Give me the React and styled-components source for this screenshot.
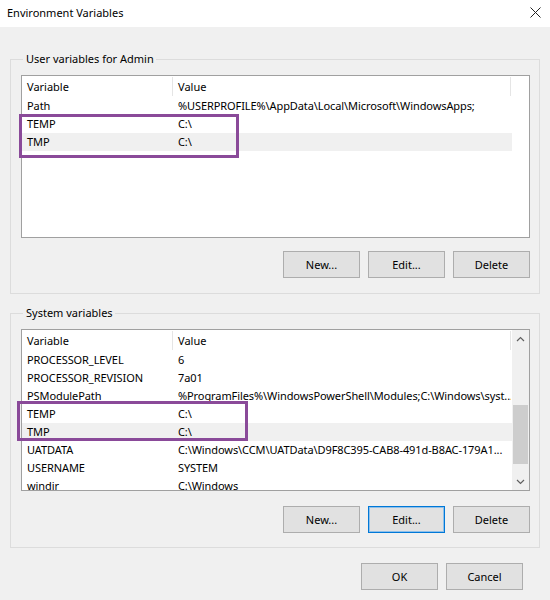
import React from "react";
import styled, { createGlobalStyle } from "styled-components";

const Global = createGlobalStyle`
  html, body { margin: 0; padding: 0; background: #f0f0f0; }
  body { font-family: "Noto Sans", "Segoe UI", sans-serif; font-size: 11px; color: #000; }
  * { box-sizing: border-box; }
`;

const Window = styled.div`
  width: 550px;
  height: 600px;
  display: flex;
  flex-direction: column;
  background: #f0f0f0;
  overflow: hidden;
`;

const TitleBar = styled.div`
  height: 27px;
  flex: 0 0 27px;
  background: #fff;
  display: flex;
  align-items: center;
  justify-content: space-between;
  padding: 0 9px 3px 7px;
  font-size: 11px;
`;

const CloseIcon = () => (
  <svg width="11" height="11" viewBox="0 0 11 11">
    <path d="M0.5 0.5 L10.5 10.5 M10.5 0.5 L0.5 10.5" stroke="#222" strokeWidth="1" fill="none" />
  </svg>
);

const Body = styled.div`
  flex: 1;
  display: flex;
  flex-direction: column;
  padding: 24px 10px 0 10px;
`;

const Group = styled.fieldset`
  margin: ${(p) => p.$mt || 0}px 0 0 0;
  padding: 8px 9px ${(p) => p.$pb || 14}px 10px;
  border: 1px solid #dcdcdc;
  min-width: 0;
`;

const Legend = styled.legend`
  padding: 0 2px 0 3px;
  margin-left: 2px;
  font-size: 11px;
  line-height: 16px;
`;

const ListBox = styled.div`
  height: ${(p) => p.$h}px;
  border: 1px solid #a0a0a0;
  background: #fff;
  display: flex;
  overflow: hidden;
`;

const ListContent = styled.div`
  flex: 1;
  display: flex;
  flex-direction: column;
  overflow: hidden;
  min-width: 0;
`;

const HeaderRow = styled.div`
  display: flex;
  height: 21px;
  flex: 0 0 21px;
`;

const HeaderCell = styled.div`
  width: ${(p) => p.$w}px;
  flex: 0 0 ${(p) => p.$w}px;
  padding-left: 5px;
  display: flex;
  align-items: center;
  border-right: 1px solid #e5e5e5;
  height: 19px;
  margin-top: 1px;
  line-height: 19px;
`;

const Row = styled.div`
  display: flex;
  height: 18px;
  flex: 0 0 18px;
  width: 490px;
  background: ${(p) => (p.$hl ? "#f0f0f0" : "transparent")};
`;

const Cell = styled.div`
  width: ${(p) => p.$w}px;
  flex: 0 0 ${(p) => p.$w}px;
  padding-left: 5px;
  white-space: nowrap;
  overflow: hidden;
  line-height: 18px;
  letter-spacing: -0.09px;
`;

const Scrollbar = styled.div`
  width: 17px;
  flex: 0 0 17px;
  background: #f0f0f0;
  display: flex;
  flex-direction: column;
`;

const ArrowBtn = styled.div`
  height: 17px;
  flex: 0 0 17px;
  display: flex;
  align-items: center;
  justify-content: center;
`;

const Track = styled.div`
  flex: 1;
  display: flex;
  flex-direction: column;
  padding: 0 1px;
`;

const Thumb = styled.div`
  margin-top: ${(p) => p.$top}px;
  height: ${(p) => p.$h}px;
  background: #cdcdcd;
`;

const ButtonRow = styled.div`
  display: flex;
  justify-content: flex-end;
  gap: 8px;
  margin-top: ${(p) => p.$mt}px;
  padding-right: ${(p) => p.$pr || 0}px;
`;

const Button = styled.button`
  width: 77px;
  height: 27px;
  background: #e1e1e1;
  border: 1px solid ${(p) => (p.$focus ? "#0078d7" : "#adadad")};
  box-shadow: ${(p) => (p.$focus ? "inset 0 0 0 1px #8fc0ea" : "none")};
  font-family: inherit;
  font-size: 11px;
  color: #000;
  padding: 0 0 1px 0;
`;

const Chevron = ({ up }) => (
  <svg width="9" height="6" viewBox="0 0 9 6">
    <path
      d={up ? "M1 5 L4.5 1.5 L8 5" : "M1 1 L4.5 4.5 L8 1"}
      stroke="#606060"
      strokeWidth="1.2"
      fill="none"
    />
  </svg>
);

const userRows = [
  ["Path", "%USERPROFILE%\\AppData\\Local\\Microsoft\\WindowsApps;"],
  ["TEMP", "C:\\"],
  ["TMP", "C:\\", true],
];

const sysRows = [
  ["PROCESSOR_LEVEL", "6"],
  ["PROCESSOR_REVISION", "7a01"],
  ["PSModulePath", "%ProgramFiles%\\WindowsPowerShell\\Modules;C:\\Windows\\syst..."],
  ["TEMP", "C:\\"],
  ["TMP", "C:\\", true],
  ["UATDATA", "C:\\Windows\\CCM\\UATData\\D9F8C395-CAB8-491d-B8AC-179A1..."],
  ["USERNAME", "SYSTEM"],
  ["windir", "C:\\Windows"],
];

const Highlight = styled.div`
  position: absolute;
  left: ${(p) => p.$x}px;
  top: ${(p) => p.$y}px;
  width: ${(p) => p.$w}px;
  height: ${(p) => p.$h}px;
  border: 3px solid #8a4a99;
  pointer-events: none;
`;

const Stage = styled.div`
  position: relative;
  width: 550px;
  height: 600px;
`;

const Table = ({ rows }) => (
  <ListContent>
    <HeaderRow>
      <HeaderCell $w={151}>Variable</HeaderCell>
      <HeaderCell $w={338}>Value</HeaderCell>
    </HeaderRow>
    {rows.map(([k, v, hl]) => (
      <Row key={k} $hl={hl}>
        <Cell $w={151}>{k}</Cell>
        <Cell $w={338}>{v}</Cell>
      </Row>
    ))}
  </ListContent>
);

export default function App() {
  return (
    <Stage>
      <Global />
      <Window>
        <TitleBar>
          <span>Environment Variables</span>
          <CloseIcon />
        </TitleBar>
        <Body>
          <Group $pb={15}>
            <Legend>User variables for Admin</Legend>
            <ListBox $h={163}>
              <Table rows={userRows} />
            </ListBox>
            <ButtonRow $mt={13}>
              <Button>New...</Button>
              <Button>Edit...</Button>
              <Button>Delete</Button>
            </ButtonRow>
          </Group>
          <Group $mt={11}>
            <Legend>System variables</Legend>
            <ListBox $h={162}>
              <Table rows={sysRows} />
              <Scrollbar>
                <ArrowBtn>
                  <Chevron up />
                </ArrowBtn>
                <Track>
                  <Thumb $top={58} $h={59} />
                </Track>
                <ArrowBtn>
                  <Chevron />
                </ArrowBtn>
              </Scrollbar>
            </ListBox>
            <ButtonRow $mt={15}>
              <Button>New...</Button>
              <Button $focus>Edit...</Button>
              <Button>Delete</Button>
            </ButtonRow>
          </Group>
          <ButtonRow $mt={15} $pr={17}>
            <Button>OK</Button>
            <Button>Cancel</Button>
          </ButtonRow>
        </Body>
      </Window>
      <Highlight $x={19} $y={114} $w={220} $h={44} />
      <Highlight $x={17} $y={401} $w={231} $h={40} />
    </Stage>
  );
}
